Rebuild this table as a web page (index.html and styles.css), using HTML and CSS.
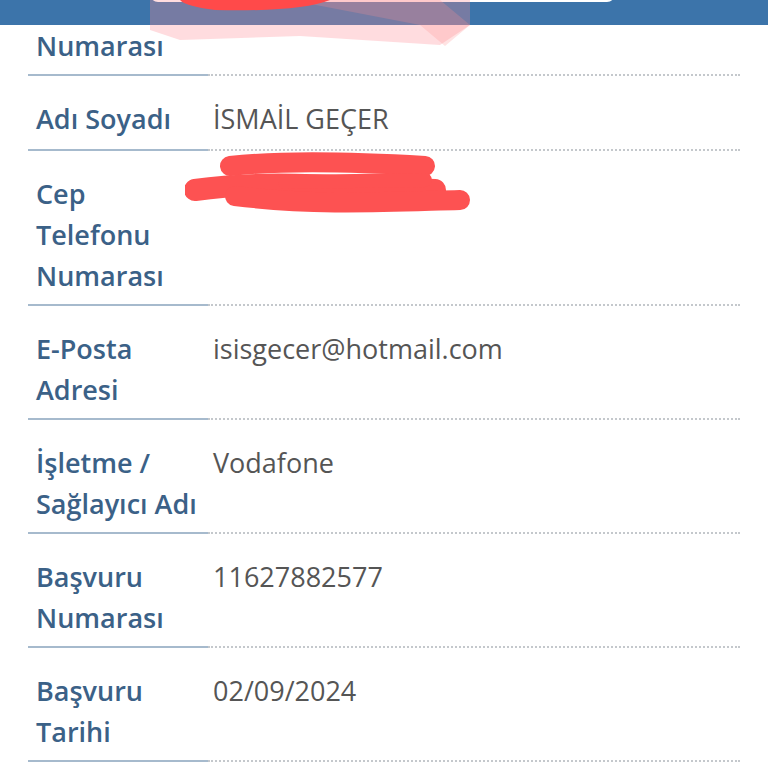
FILE: index.html
```html
<!DOCTYPE html>
<html lang="tr">
<head>
<meta charset="utf-8">
<link rel="stylesheet" href="styles.css">
</head>
<body>
<div class="page">
  <header class="topbar">
    <div class="search"></div>
  </header>
  <table class="info">
    <tr class="first"><th>Numarası</th><td></td></tr>
    <tr class="single"><th>Adı Soyadı</th><td>İSMAİL GEÇER</td></tr>
    <tr><th>Cep Telefonu Numarası</th><td></td></tr>
    <tr><th>E-Posta Adresi</th><td>isisgecer@hotmail.com</td></tr>
    <tr><th>İşletme / Sağlayıcı Adı</th><td>Vodafone</td></tr>
    <tr><th>Başvuru Numarası</th><td>11627882577</td></tr>
    <tr><th>Başvuru Tarihi</th><td>02/09/2024</td></tr>
  </table>
  <svg class="scribble top" width="768" height="60" viewBox="0 0 768 60">
    <path d="M150 0 L470 0 L470 25 L440 45 L300 36 L180 40 L150 30 Z" fill="#ff8a95" opacity="0.3"/>
    <path d="M290 0 L440 0 L470 25 L445 46 L420 25 Z" fill="#ff9090" opacity="0.25"/>
    <path d="M180 0 L330 0 Q300 12 215 10 Q185 6 180 0 Z" fill="#ff4a4a"/>
  </svg>
  <svg class="scribble phone" width="300" height="80" viewBox="0 0 300 80">
    <g stroke="#fd5252" stroke-linecap="round" stroke-linejoin="round" fill="none">
      <path d="M45 14 C100 8 170 10 240 14" stroke-width="20"/>
      <path d="M10 38 C80 28 140 34 250 38" stroke-width="22"/>
      <path d="M50 44 C130 54 200 50 275 48" stroke-width="20"/>
      <path d="M100 30 L240 28" stroke-width="14"/>
    </g>
  </svg>
</div>
</body>
</html>
```
FILE: styles.css
```css
html, body {
  margin: 0;
  padding: 0;
  background: #ffffff;
}
.page {
  position: relative;
  width: 768px;
  height: 768px;
  overflow: hidden;
  font-family: "Open Sans", "Noto Sans", sans-serif;
}
.topbar {
  height: 25px;
  background: #3c74aa;
  position: relative;
}
.search {
  position: absolute;
  left: 150px;
  top: -10px;
  width: 465px;
  height: 12px;
  background: #ffffff;
  border-radius: 0 0 8px 8px;
}
.info {
  margin-left: 28px;
  width: 712px;
  border-collapse: collapse;
  table-layout: fixed;
}
.info th {
  width: 163px;
  text-align: left;
  vertical-align: top;
  font-weight: 600;
  color: #3b6187;
  font-size: 27px;
  line-height: 41px;
  padding: 22px 9px 8px 8px;
  border-bottom: 2px solid #a6bacd;
}
.info td {
  vertical-align: top;
  color: #555555;
  font-size: 27px;
  line-height: 41px;
  padding: 22px 8px 8px 5px;
  border-bottom: 2px dotted #c4c8cc;
}
.info tr.first th,
.info tr.first td {
  padding-top: 0;
}
.info tr.single th,
.info tr.single td {
  padding-bottom: 10px;
}
.scribble {
  position: absolute;
}
.scribble.top {
  left: 0;
  top: 0;
}
.scribble.phone {
  left: 185px;
  top: 152px;
}
```
